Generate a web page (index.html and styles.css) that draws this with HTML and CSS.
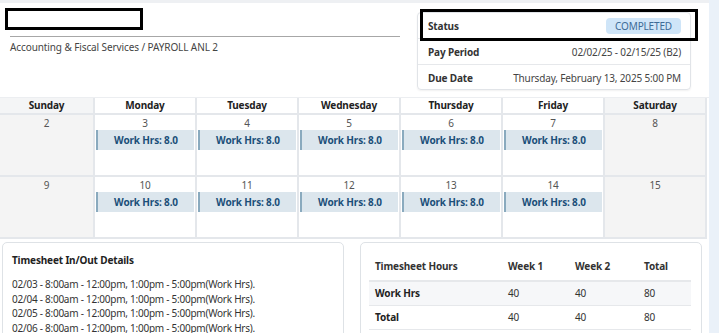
FILE: index.html
```html
<!DOCTYPE html>
<html>
<head>
<meta charset="utf-8">
<link rel="stylesheet" href="styles.css">
</head>
<body>
<div class="page">
  <div class="main">
    <div class="topstrip"></div>
    <div class="header">
      <div class="title-area">
        <div class="redact"></div>
        <div class="rule"></div>
        <div class="dept">Accounting &amp; Fiscal Services / PAYROLL ANL 2</div>
      </div>
      <div class="info-card">
        <div class="highlight"></div>
        <div class="info-row"><span class="lbl">Status</span><span class="badge">COMPLETED</span></div>
        <div class="info-row"><span class="lbl">Pay Period</span><span class="val">02/02/25 - 02/15/25 (B2)</span></div>
        <div class="info-row last"><span class="lbl">Due Date</span><span class="val">Thursday, February 13, 2025 5:00 PM</span></div>
      </div>
    </div>

    <div class="calendar">
      <div class="hd wk">Sunday</div>
      <div class="hd">Monday</div>
      <div class="hd">Tuesday</div>
      <div class="hd">Wednesday</div>
      <div class="hd">Thursday</div>
      <div class="hd">Friday</div>
      <div class="hd wk">Saturday</div>

      <div class="day wk"><div class="num">2</div></div>
      <div class="day"><div class="num">3</div><div class="ev">Work Hrs: 8.0</div></div>
      <div class="day"><div class="num">4</div><div class="ev">Work Hrs: 8.0</div></div>
      <div class="day"><div class="num">5</div><div class="ev">Work Hrs: 8.0</div></div>
      <div class="day"><div class="num">6</div><div class="ev">Work Hrs: 8.0</div></div>
      <div class="day"><div class="num">7</div><div class="ev">Work Hrs: 8.0</div></div>
      <div class="day wk"><div class="num">8</div></div>

      <div class="day wk"><div class="num">9</div></div>
      <div class="day"><div class="num">10</div><div class="ev">Work Hrs: 8.0</div></div>
      <div class="day"><div class="num">11</div><div class="ev">Work Hrs: 8.0</div></div>
      <div class="day"><div class="num">12</div><div class="ev">Work Hrs: 8.0</div></div>
      <div class="day"><div class="num">13</div><div class="ev">Work Hrs: 8.0</div></div>
      <div class="day"><div class="num">14</div><div class="ev">Work Hrs: 8.0</div></div>
      <div class="day wk"><div class="num">15</div></div>
    </div>

    <div class="bottom">
      <div class="card details">
        <div class="card-title">Timesheet In/Out Details</div>
        <div class="line">02/03 - 8:00am - 12:00pm, 1:00pm - 5:00pm(Work Hrs).</div>
        <div class="line">02/04 - 8:00am - 12:00pm, 1:00pm - 5:00pm(Work Hrs).</div>
        <div class="line">02/05 - 8:00am - 12:00pm, 1:00pm - 5:00pm(Work Hrs).</div>
        <div class="line">02/06 - 8:00am - 12:00pm, 1:00pm - 5:00pm(Work Hrs).</div>
      </div>
      <div class="card hours">
        <table class="htable">
          <thead>
            <tr><th class="c1">Timesheet Hours</th><th class="c2">Week 1</th><th class="c3">Week 2</th><th class="c4">Total</th></tr>
          </thead>
          <tbody>
            <tr class="shade"><td class="b">Work Hrs</td><td>40</td><td>40</td><td>80</td></tr>
            <tr><td class="b">Total</td><td>40</td><td>40</td><td>80</td></tr>
          </tbody>
        </table>
      </div>
    </div>
  </div>
  <div class="sidebar"></div>
</div>
</body>
</html>
```

FILE: styles.css
```css
* { box-sizing: border-box; }
html, body { margin: 0; padding: 0; }
body {
  font-family: "Noto Sans", "Open Sans", sans-serif;
  font-size: 10px;
  letter-spacing: -0.15px;
  color: #333;
  background: #fff;
  overflow: hidden;
  height: 333px;
}
.page { display: flex; width: 719px; height: 333px; overflow: hidden; }
.main { width: 709px; flex: none; }
.sidebar { flex: 1; background: #eaf1f9; }
.topstrip { height: 3px; background: #eef0f3; }

.header { display: flex; height: 94px; }
.title-area { width: 410px; padding-top: 5px; }
.redact {
  margin-left: 5px;
  width: 138px;
  height: 22px;
  border: 3px solid #000;
  background: #fff;
}
.rule {
  margin: 6px 0 0 10px;
  width: 390px;
  border-top: 1px solid #a7a7a7;
}
.dept {
  margin: 3px 0 0 10px;
  font-size: 10px;
  color: #444;
  letter-spacing: -0.1px;
}

.info-card {
  position: relative;
  margin: 9px 0 0 7px;
  width: 274px;
  height: 78px;
  border: 1px solid #e1e4e8;
  border-radius: 4px;
  box-shadow: 0 1px 2px rgba(0,0,0,0.06);
}
.highlight {
  position: absolute;
  left: 2px;
  top: -4px;
  width: 278px;
  height: 32px;
  border: 3px solid #000;
}
.info-row {
  display: flex;
  justify-content: space-between;
  align-items: center;
  height: 26px;
  padding: 0 9px 0 10px;
  border-bottom: 1px solid #e6e8eb;
}
.info-row.last { border-bottom: none; }
.lbl { font-weight: 700; color: #333; }
.val { color: #444; }
.badge {
  background: #cfe5f8;
  color: #3d6b97;
  padding: 1px 9px;
  border-radius: 4px;
  line-height: 14px;
}

.calendar {
  display: grid;
  grid-template-columns: 95px repeat(6, 102px);
  grid-template-rows: 17px 62px 62px;
  border-top: 1px solid #eceef1;
}
.hd {
  font-weight: 700;
  text-align: center;
  line-height: 15px;
  color: #222;
  border-right: 2px solid #e4e7eb;
  border-bottom: 2px solid #e4e7eb;
  background: #fff;
}
.hd.wk { background: #f4f5f6; }
.day {
  border-right: 2px solid #e4e7eb;
  border-bottom: 2px solid #e4e7eb;
  background: #fff;
  padding: 0 1px;
}
.day.wk { background: #f4f4f4; }
.num {
  text-align: center;
  color: #555;
  line-height: 14px;
  margin-top: 1px;
}
.ev {
  height: 20px;
  line-height: 20px;
  background: #dce6ed;
  border-left: 2px solid #8aaabe;
  color: #1b4f79;
  font-weight: 700;
  text-align: center;
}

.bottom {
  display: flex;
  gap: 16px;
  padding: 3px 7px 0 2px;
}
.card {
  border: 1px solid #dee2e6;
  border-radius: 5px;
  background: #fff;
  height: 110px;
}
.details { width: 342px; padding: 9px 9px; }
.card-title { font-weight: 700; color: #222; line-height: 16px; margin-bottom: 9px; }
.line { line-height: 14.7px; color: #333; letter-spacing: -0.25px; }
.hours { width: 342px; padding: 9px 10px 0 8px; }
.htable { width: 100%; border-collapse: collapse; font-size: 10px; }
.htable th {
  text-align: left;
  font-weight: 700;
  color: #333;
  padding: 0 6px;
  height: 29px;
  border-bottom: 2px solid #e6e8eb;
}
.htable .c1 { width: 133px; }
.htable .c2 { width: 67px; }
.htable .c3 { width: 69px; }
.htable td {
  padding: 0 6px;
  height: 24px;
  border-bottom: 1px solid #e6e8eb;
  color: #333;
}
.htable td.b { font-weight: 700; color: #222; }
.htable tr.shade td { background: #f6f7f9; }
```
